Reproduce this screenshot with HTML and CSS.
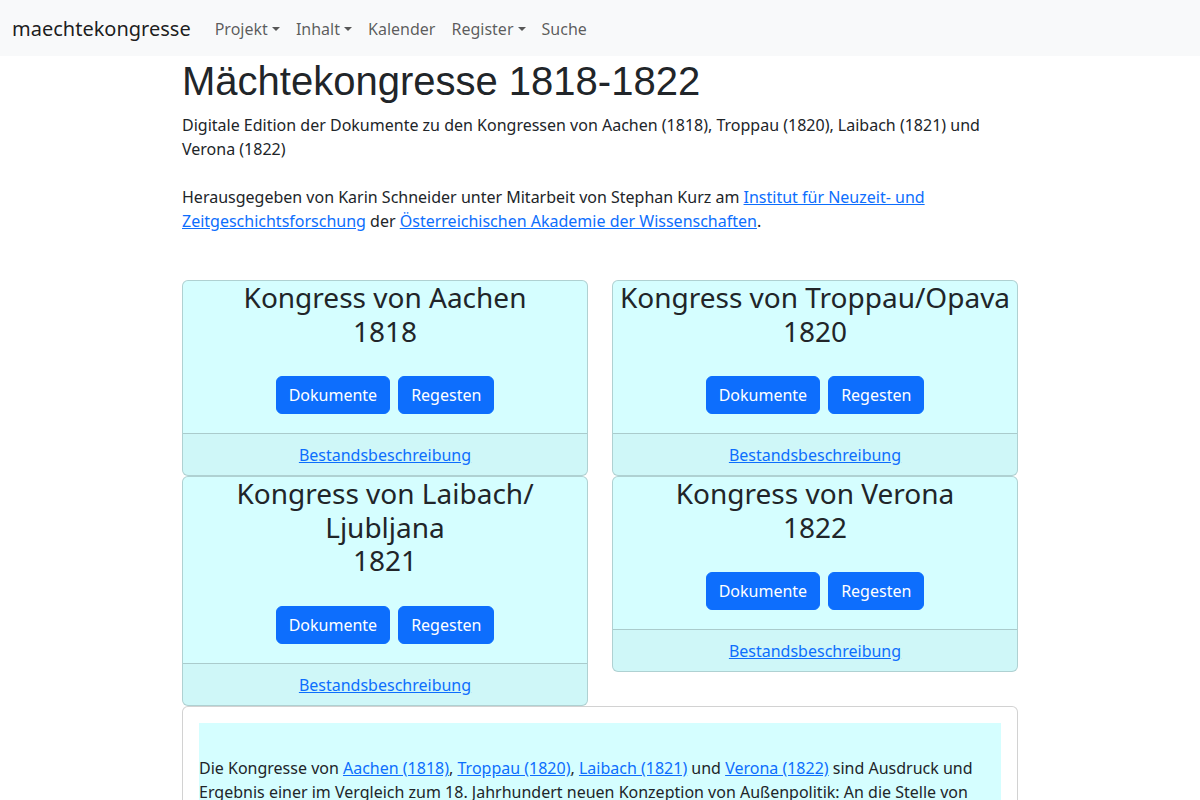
FILE: index.html
```html
<!DOCTYPE html>
<html lang="de">
<head>
<meta charset="utf-8">
<title>maechtekongresse</title>
<link rel="stylesheet" href="styles.css">
</head>
<body>
<nav class="navbar">
  <a class="brand" href="#">maechtekongresse</a>
  <ul class="nav">
    <li><a class="nav-link toggle" href="#">Projekt</a></li>
    <li><a class="nav-link toggle" href="#">Inhalt</a></li>
    <li><a class="nav-link" href="#">Kalender</a></li>
    <li><a class="nav-link toggle" href="#">Register</a></li>
    <li><a class="nav-link" href="#">Suche</a></li>
  </ul>
</nav>
<main class="main">
  <h1 class="title">Mächtekongresse 1818-1822</h1>
  <p class="intro">Digitale Edition der Dokumente zu den Kongressen von Aachen (1818), Troppau (1820), Laibach (1821) und Verona (1822)<br><br>Herausgegeben von Karin Schneider unter Mitarbeit von Stephan Kurz am <a href="#">Institut für Neuzeit- und Zeitgeschichtsforschung</a> der <a href="#">Österreichischen Akademie der Wissenschaften</a>.</p>

  <div class="cards">
    <div class="card">
      <h3 class="card-title">Kongress von Aachen<br>1818</h3>
      <div class="card-body">
        <a class="btn" href="#">Dokumente</a>
        <a class="btn" href="#">Regesten</a>
      </div>
      <div class="card-footer"><a href="#">Bestandsbeschreibung</a></div>
    </div>
    <div class="card">
      <h3 class="card-title">Kongress von Troppau/Opava<br>1820</h3>
      <div class="card-body">
        <a class="btn" href="#">Dokumente</a>
        <a class="btn" href="#">Regesten</a>
      </div>
      <div class="card-footer"><a href="#">Bestandsbeschreibung</a></div>
    </div>
    <div class="card">
      <h3 class="card-title">Kongress von Laibach/<br>Ljubljana<br>1821</h3>
      <div class="card-body">
        <a class="btn" href="#">Dokumente</a>
        <a class="btn" href="#">Regesten</a>
      </div>
      <div class="card-footer"><a href="#">Bestandsbeschreibung</a></div>
    </div>
    <div class="card">
      <h3 class="card-title">Kongress von Verona<br>1822</h3>
      <div class="card-body">
        <a class="btn" href="#">Dokumente</a>
        <a class="btn" href="#">Regesten</a>
      </div>
      <div class="card-footer"><a href="#">Bestandsbeschreibung</a></div>
    </div>
  </div>

  <div class="info-card">
    <div class="info-inner">
      <p>Die Kongresse von <a href="#">Aachen (1818)</a>, <a href="#">Troppau (1820)</a>, <a href="#">Laibach (1821)</a> und <a href="#">Verona (1822)</a> sind Ausdruck und Ergebnis einer im Vergleich zum 18. Jahrhundert neuen Konzeption von Außenpolitik: An die Stelle von einseitigen Machtansprüchen trat das Bestreben, Konflikte durch gemeinsame Beratungen der Großmächte zu lösen und so ein dauerhaftes Gleichgewicht in Europa zu sichern.</p>
    </div>
  </div>
</main>
</body>
</html>
```

FILE: styles.css
```css
* { box-sizing: border-box; }

html, body {
  margin: 0;
  padding: 0;
}

body {
  font-family: "Noto Sans", "DejaVu Sans", sans-serif;
  font-size: 16px;
  line-height: 1.5;
  color: #212529;
  background: #fff;
}

a { color: #0d6efd; text-decoration: underline; }

.navbar {
  display: flex;
  align-items: center;
  height: 56px;
  padding: 9px 12px 7px;
  background: #f8f9fa;
}

.brand {
  font-size: 20px;
  line-height: 30px;
  padding: 5px 0;
  margin-right: 16px;
  color: rgba(0, 0, 0, 0.9);
  text-decoration: none;
  white-space: nowrap;
}

.nav {
  display: flex;
  list-style: none;
  margin: 0;
  padding: 0;
}

.nav-link {
  display: block;
  padding: 8px;
  line-height: 24px;
  color: rgba(0, 0, 0, 0.65);
  text-decoration: none;
}

.toggle::after {
  content: "";
  display: inline-block;
  margin-left: 0.255em;
  vertical-align: 0.255em;
  border-top: 0.3em solid;
  border-right: 0.3em solid transparent;
  border-left: 0.3em solid transparent;
  border-bottom: 0;
}

.main {
  width: 836px;
  margin: 0 auto;
}

.title {
  font-family: "Liberation Sans", Arial, sans-serif;
  font-size: 40px;
  font-weight: 400;
  line-height: 1.2;
  margin: 1px 0 8px;
}

.intro {
  margin: 0;
}

.cards {
  display: grid;
  grid-template-columns: 1fr 1fr;
  column-gap: 24px;
  row-gap: 0;
  align-items: start;
  margin-top: 47px;
}

.card {
  background: #d5feff;
  border: 1px solid rgba(0, 0, 0, 0.175);
  border-radius: 6px;
  text-align: center;
  overflow: hidden;
}

.card-title {
  font-size: 28px;
  font-weight: 400;
  line-height: 1.2;
  margin: 0;
  padding: 0 4px;
  white-space: nowrap;
}

.card-body {
  display: flex;
  justify-content: center;
  gap: 8px;
  padding: 28px 16px 19px;
}

.btn {
  display: inline-block;
  padding: 6px 12px;
  line-height: 24px;
  font-size: 16px;
  color: #fff;
  background: #0d6efd;
  border: 1px solid #0d6efd;
  border-radius: 6px;
  text-decoration: none;
}

.card-footer {
  padding: 9px 16px 8px;
  border-top: 1px solid rgba(0, 0, 0, 0.175);
  background: rgba(33, 37, 41, 0.03);
}

.info-card {
  border: 1px solid rgba(0, 0, 0, 0.175);
  border-radius: 6px;
  padding: 16px;
  background: #fff;
}

.info-inner {
  background: #d5feff;
  padding-top: 33px;
}

.info-inner p {
  margin: 0 0 16px;
}
```
